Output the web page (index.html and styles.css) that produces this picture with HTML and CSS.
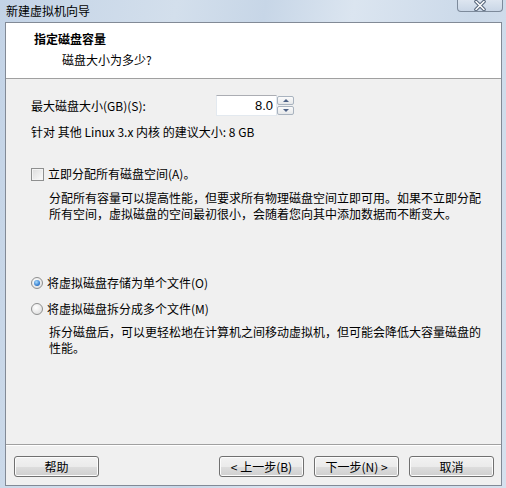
FILE: index.html
```html
<!DOCTYPE html>
<html lang="zh-CN">
<head>
<meta charset="utf-8">
<title>新建虚拟机向导</title>
<link rel="stylesheet" href="styles.css">
</head>
<body>
<div class="window">
  <div class="titlebar">
    <span class="title">新建虚拟机向导</span>
    <div class="close">
      <svg width="16" height="11" viewBox="0 0 16 11">
        <path d="M4 1.5 L12 9.5 M12 1.5 L4 9.5" stroke="#56657a" stroke-width="3.6" stroke-linecap="round" fill="none"/>
        <path d="M4 1.5 L12 9.5 M12 1.5 L4 9.5" stroke="#ffffff" stroke-width="1.6" stroke-linecap="round" fill="none"/>
      </svg>
    </div>
  </div>
  <div class="panel">
    <div class="header">
      <div class="h-title">指定磁盘容量</div>
      <div class="h-sub">磁盘大小为多少?</div>
    </div>
    <div class="content">
      <div class="row size-row">
        <span class="label">最大磁盘大小(GB)(S):</span>
        <div class="spin">
          <div class="spin-field">8.0</div>
          <div class="spin-btns">
            <div class="spin-btn up"><span class="tri-up"></span></div>
            <div class="spin-btn down"><span class="tri-down"></span></div>
          </div>
        </div>
      </div>
      <div class="row hint">针对 其他 Linux 3.x 内核 的建议大小: 8 GB</div>
      <div class="row check-row">
        <span class="checkbox"></span>
        <span>立即分配所有磁盘空间(A)。</span>
      </div>
      <p class="desc">分配所有容量可以提高性能，但要求所有物理磁盘空间立即可用。如果不立即分配<br>所有空间，虚拟磁盘的空间最初很小，会随着您向其中添加数据而不断变大。</p>
      <div class="row radio-row first">
        <span class="radio checked"><span class="dot"></span></span>
        <span>将虚拟磁盘存储为单个文件(O)</span>
      </div>
      <div class="row radio-row second">
        <span class="radio"></span>
        <span>将虚拟磁盘拆分成多个文件(M)</span>
      </div>
      <p class="desc desc2">拆分磁盘后，可以更轻松地在计算机之间移动虚拟机，但可能会降低大容量磁盘的<br>性能。</p>
    </div>
    <div class="footer">
      <button class="btn">帮助</button>
      <div class="spacer"></div>
      <button class="btn">&lt; 上一步(B)</button>
      <button class="btn">下一步(N) &gt;</button>
      <button class="btn">取消</button>
    </div>
  </div>
</div>
</body>
</html>
```
FILE: styles.css
```css
* { box-sizing: border-box; }
html, body { margin: 0; padding: 0; }
body {
  width: 506px;
  height: 488px;
  overflow: hidden;
  font-family: "Liberation Sans", "Noto Sans CJK SC", sans-serif;
  font-size: 12px;
  color: #000;
}
.window {
  width: 506px;
  height: 488px;
  display: flex;
  flex-direction: column;
  background: linear-gradient(100deg, #c3d3e6 0%, #d3dfec 30%, #c7d6e7 45%, #dbe5f0 60%, #cbd9e9 80%, #d6e1ee 100%);
}
.titlebar {
  height: 22px;
  flex: none;
  display: flex;
  align-items: flex-start;
  justify-content: space-between;
  padding-left: 6px;
}
.title {
  line-height: 20px;
  padding-top: 1px;
  color: #000;
  font-family: "Noto Sans CJK SC", sans-serif;
}
.close {
  width: 46px;
  height: 13px;
  margin-right: 3px;
  margin-top: -1px;
  border: 1px solid #7d8a9b;
  border-top: none;
  border-radius: 0 0 4px 4px;
  background: linear-gradient(#dfe7f1, #c9d6e6);
  display: flex;
  align-items: center;
  justify-content: center;
}
.panel {
  flex: 1;
  margin: 0 4px 2px 5px;
  border: 1px solid #828a96;
  background: #f0f0f0;
  display: flex;
  flex-direction: column;
}
.header {
  height: 56px;
  flex: none;
  background: #fff;
  border-bottom: 1px solid #a0a0a0;
  padding: 8px 0 0 28px;
  font-family: "Noto Sans CJK SC", sans-serif;
}
.h-title {
  font-weight: bold;
  line-height: 16px;
}
.h-sub {
  line-height: 16px;
  margin-top: 5px;
  padding-left: 28px;
}
.content {
  flex: 1;
  padding: 16px 0 0 25px;
  font-family: "Noto Sans CJK SC", sans-serif;
  border-bottom: 1px solid #a0a0a0;
}
.row {
  display: flex;
  align-items: center;
  line-height: 16px;
}
.size-row { height: 21px; }
.label { width: 185px; }
.spin {
  display: flex;
  height: 21px;
}
.spin-field {
  width: 61px;
  height: 21px;
  background: #fff;
  border: 1px solid #e3e9ef;
  border-top-color: #abadb3;
  text-align: right;
  padding-right: 3px;
  line-height: 19px;
  font-family: "Liberation Sans", sans-serif;
  font-size: 13px;
}
.spin-btns {
  width: 17px;
  display: flex;
  flex-direction: column;
  gap: 1px;
  padding: 1px 0;
}
.spin-btn {
  flex: 1;
  border: 1px solid #a9b3bf;
  border-radius: 2px;
  background: linear-gradient(#fbfbfb, #e6e8ea);
  display: flex;
  align-items: center;
  justify-content: center;
}
.tri-up {
  width: 0; height: 0;
  border-left: 3px solid transparent;
  border-right: 3px solid transparent;
  border-bottom: 3px solid #4d6185;
}
.tri-down {
  width: 0; height: 0;
  border-left: 3px solid transparent;
  border-right: 3px solid transparent;
  border-top: 3px solid #4d6185;
}
.hint { margin-top: 8px; }
.check-row { margin-top: 26px; gap: 4px; }
.checkbox {
  width: 13px;
  height: 13px;
  flex: none;
  border: 1px solid #8e8f8f;
  background: linear-gradient(135deg, #dcdcdc, #fbfbfb);
  box-shadow: inset 0 0 0 1px #f4f4f4;
}
.desc {
  margin: 8px 0 0 18px;
  line-height: 16px;
}
.radio-row { gap: 4px; }
.radio-row.first { margin-top: 53px; }
.radio-row.second { margin-top: 10px; }
.radio {
  width: 12px;
  height: 12px;
  flex: none;
  border-radius: 50%;
  border: 1px solid #8e8f8f;
  background: radial-gradient(circle at 40% 35%, #ffffff, #d8d8d8);
  display: flex;
  align-items: center;
  justify-content: center;
}
.dot {
  width: 6px;
  height: 6px;
  border-radius: 50%;
  background: radial-gradient(circle at 40% 35%, #a8dcff, #2a74c9 70%, #134f9a);
}
.desc2 { margin-top: 7px; }
.footer {
  height: 40px;
  flex: none;
  display: flex;
  padding: 10px 7px 0 8px;
  gap: 10px;
  border-top: 1px solid #ffffff;
}
.spacer { flex: 1; }
.btn {
  width: 85px;
  height: 21px;
  margin: 0;
  padding: 0;
  border: 1px solid #707070;
  border-radius: 3px;
  background: linear-gradient(#f2f2f2 0%, #ebebeb 50%, #dddddd 51%, #cfcfcf 100%);
  box-shadow: inset 0 0 0 1px #fcfcfc;
  font-family: "Noto Sans CJK SC", sans-serif;
  font-size: 12px;
  color: #000;
  line-height: 19px;
}
```
